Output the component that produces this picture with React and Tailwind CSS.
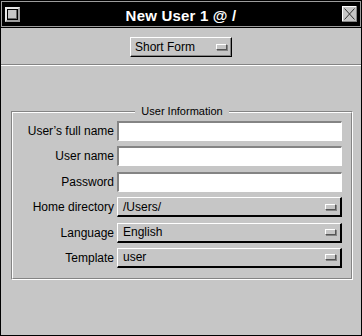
import React from "react";

const F = { fontFamily: '"Liberation Sans", Arial, sans-serif' };

function Indicator() {
  return (
    <div className="w-[11px] h-[6px] bg-[#c6c6c6] border-t border-l border-t-white border-l-white border-b border-r border-b-[#555] border-r-[#555] shadow-[1px_1px_0_#848484]" />
  );
}

function TextField() {
  return (
    <div className="h-[20px] bg-white border-t-2 border-l-2 border-t-[#848484] border-l-[#848484] border-b border-r border-b-white border-r-white" />
  );
}

function Select({ value }) {
  return (
    <div className="h-[20px] flex items-center justify-between bg-[#c6c6c6] border-t border-l border-t-white border-l-white border-b-2 border-r-2 border-b-black border-r-black pl-[5px] pr-[4px] text-[12px] text-black leading-none">
      <span>{value}</span>
      <Indicator />
    </div>
  );
}

function Label({ children }) {
  return (
    <div className="h-[20px] flex items-center justify-end text-[12px] text-black leading-none whitespace-nowrap">
      {children}
    </div>
  );
}

export default function App() {
  return (
    <div style={F} className="w-[362px] h-[336px] bg-[#c6c6c6] border border-black flex flex-col">
      {/* Title bar */}
      <div className="h-[27px] bg-black border-b border-black shrink-0">
        <div className="h-[26px] border border-[#9c9c9c] flex items-center justify-between px-[3px]">
          <div className="w-[15px] h-[15px] bg-black border-2 border-t-[#e8e8e8] border-l-[#e8e8e8] border-b-[#9c9c9c] border-r-[#9c9c9c] p-[1px]">
            <div className="w-full h-full bg-[#c6c6c6] border-b border-r border-b-[#666] border-r-[#666]" />
          </div>
          <div className="flex-1 text-center text-white font-bold text-[15px] leading-none pt-[3px] tracking-[0.2px]">
            New User 1 @ /
          </div>
          <svg width="15" height="16" viewBox="0 0 15 16" className="block">
            <rect x="0" y="0" width="15" height="16" fill="#c6c6c6" />
            <path d="M0 0.5 H14.5 M0.5 0 V16" stroke="#ffffff" strokeWidth="1" />
            <path d="M0 15.5 H15 M14.5 0 V16" stroke="#848484" strokeWidth="1" />
            <path d="M2.5 2.5 L12.5 13.5 M12.5 2.5 L2.5 13.5" stroke="#333" strokeWidth="1" />
          </svg>
        </div>
      </div>

      {/* Short Form button */}
      <div className="flex justify-center mt-[9px]">
        <div className="w-[102px] h-[20px] flex items-center justify-between bg-[#c6c6c6] border-t border-l border-t-white border-l-white border-b border-r border-b-black border-r-black shadow-[inset_-1px_-1px_0_#848484] pl-[4px] pr-[4px] text-[12px] text-black leading-none">
          <span>Short Form</span>
          <Indicator />
        </div>
      </div>

      {/* Separator */}
      <div className="mt-[7px] border-t border-t-[#848484] border-b border-b-white" />

      {/* Group box */}
      <div className="mt-[45px] ml-[10px] w-[342px] relative border-t border-l border-t-[#848484] border-l-[#848484] border-b border-r border-b-white border-r-white">
        <div className="border-t border-l border-t-white border-l-white border-b border-r border-b-[#848484] border-r-[#848484] pt-[8px] pb-[10px]">
          <div className="grid grid-cols-[101px_225px] gap-x-[3px] gap-y-[5.4px]">
            <Label>User’s full name</Label>
            <TextField />
            <Label>User name</Label>
            <TextField />
            <Label>Password</Label>
            <TextField />
            <Label>Home directory</Label>
            <Select value="/Users/" />
            <Label>Language</Label>
            <Select value="English" />
            <Label>Template</Label>
            <Select value="user" />
          </div>
        </div>
        <div className="absolute top-[-7px] left-0 right-0 flex justify-center pointer-events-none">
          <span className="bg-[#c6c6c6] px-[6px] text-[11px] leading-[13px] text-black">User Information</span>
        </div>
      </div>
    </div>
  );
}
